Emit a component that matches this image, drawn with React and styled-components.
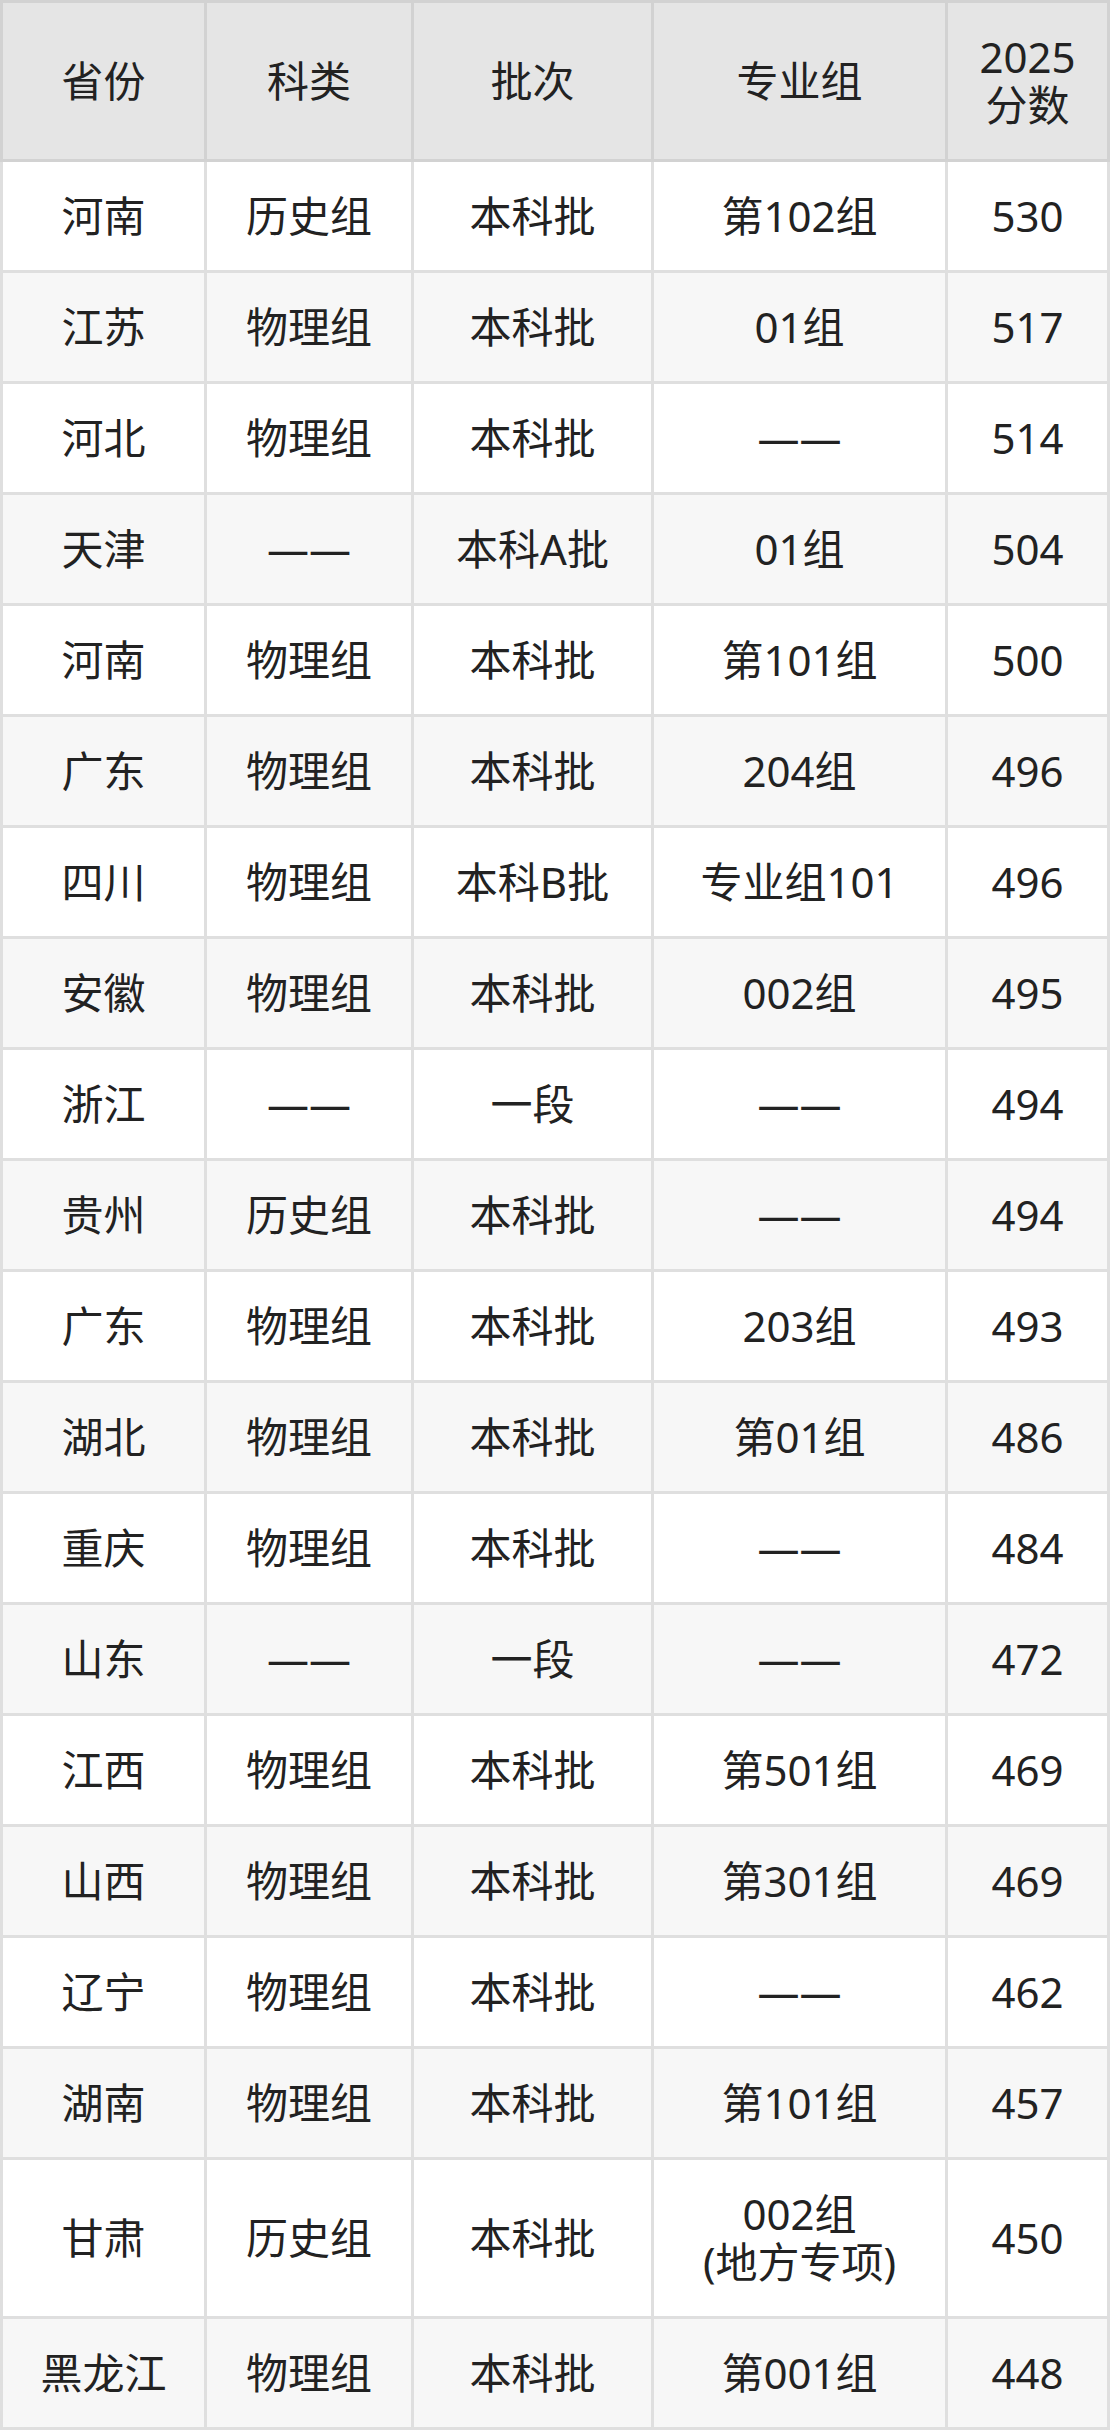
import React from "react";
import styled, { createGlobalStyle } from "styled-components";

const GlobalStyle = createGlobalStyle`
  * {
    box-sizing: border-box;
  }
  body {
    margin: 0;
    background: #ffffff;
    font-family: "Noto Sans", "Noto Sans CJK SC", sans-serif;
  }
`;

const Table = styled.table`
  width: 1110px;
  table-layout: fixed;
  border-collapse: separate;
  border-spacing: 0;
  color: #222222;
  font-size: 42px;
  line-height: 48px;
`;

const HeadCell = styled.th`
  width: ${(p) => p.$w}px;
  padding: 30px 0;
  background: #e5e5e5;
  font-weight: 400;
  text-align: center;
  vertical-align: middle;
  border-top: 3px solid #d2d2d2;
  border-right: 3px solid #d2d2d2;
  border-bottom: 3px solid #d2d2d2;
  &:first-child {
    border-left: 3px solid #d2d2d2;
  }
`;

const Row = styled.tr`
  background: ${(p) => (p.$striped ? "#f7f7f7" : "#ffffff")};
`;

const Cell = styled.td`
  padding: 30px 0;
  text-align: center;
  vertical-align: middle;
  border-right: 3px solid #dfdfdf;
  border-bottom: 3px solid #dfdfdf;
  &:first-child {
    border-left: 3px solid #dfdfdf;
  }
`;

const columns = [
  { label: "省份", w: 207 },
  { label: "科类", w: 207 },
  { label: "批次", w: 240 },
  { label: "专业组", w: 294 },
  { label: ["2025", "分数"], w: 162 },
];

const rows = [
  ["河南", "历史组", "本科批", "第102组", "530"],
  ["江苏", "物理组", "本科批", "01组", "517"],
  ["河北", "物理组", "本科批", "——", "514"],
  ["天津", "——", "本科A批", "01组", "504"],
  ["河南", "物理组", "本科批", "第101组", "500"],
  ["广东", "物理组", "本科批", "204组", "496"],
  ["四川", "物理组", "本科B批", "专业组101", "496"],
  ["安徽", "物理组", "本科批", "002组", "495"],
  ["浙江", "——", "一段", "——", "494"],
  ["贵州", "历史组", "本科批", "——", "494"],
  ["广东", "物理组", "本科批", "203组", "493"],
  ["湖北", "物理组", "本科批", "第01组", "486"],
  ["重庆", "物理组", "本科批", "——", "484"],
  ["山东", "——", "一段", "——", "472"],
  ["江西", "物理组", "本科批", "第501组", "469"],
  ["山西", "物理组", "本科批", "第301组", "469"],
  ["辽宁", "物理组", "本科批", "——", "462"],
  ["湖南", "物理组", "本科批", "第101组", "457"],
  ["甘肃", "历史组", "本科批", ["002组", "(地方专项)"], "450"],
  ["黑龙江", "物理组", "本科批", "第001组", "448"],
];

const renderText = (v) =>
  Array.isArray(v)
    ? v.map((line, i) => (
        <React.Fragment key={i}>
          {i > 0 && <br />}
          {line}
        </React.Fragment>
      ))
    : v;

const App = () => {
  return (
    <>
      <GlobalStyle />
      <Table>
        <thead>
          <tr>
            {columns.map((c, i) => (
              <HeadCell key={i} $w={c.w}>
                {renderText(c.label)}
              </HeadCell>
            ))}
          </tr>
        </thead>
        <tbody>
          {rows.map((r, i) => (
            <Row key={i} $striped={i % 2 === 1}>
              {r.map((v, j) => (
                <Cell key={j}>{renderText(v)}</Cell>
              ))}
            </Row>
          ))}
        </tbody>
      </Table>
    </>
  );
};

export default App;
